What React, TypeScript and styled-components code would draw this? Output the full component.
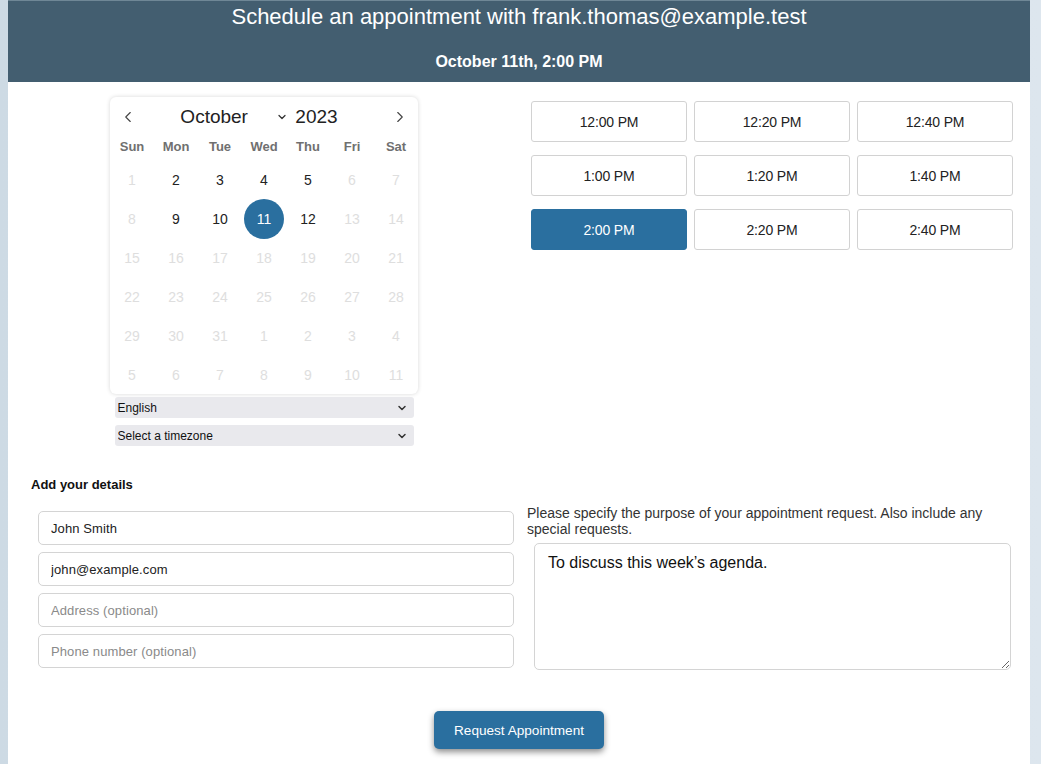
import React, { useState } from "react"
import styled, { createGlobalStyle } from "styled-components"
import { ChevronLeft, ChevronRight, ChevronDown } from "lucide-react"

const GlobalStyle = createGlobalStyle`
  html, body {
    margin: 0;
    padding: 0;
  }
  body {
    background: linear-gradient(90deg, #cddae4 0%, #d6e0e9 50%, #dde6ee 100%);
    font-family: "Liberation Sans", Arial, sans-serif;
    color: #222;
  }
  * { box-sizing: border-box; }
`

const Page = styled.div`
  width: 1022px;
  min-height: 100vh;
  margin-left: 8px;
  background: #fff;
`

const Header = styled.header`
  background: #435e70;
  color: #fff;
  text-align: center;
  padding: 3px 0 10px;
  border-top: 1px solid #6f8796;
`

const Title = styled.h1`
  margin: 0;
  font-size: 22px;
  font-weight: normal;
  line-height: 26px;
`

const Subtitle = styled.div`
  margin-top: 22px;
  font-size: 16px;
  font-weight: bold;
  line-height: 20px;
`

const Top = styled.section`
  display: grid;
  grid-template-columns: 512px 1fr;
`

const LeftCol = styled.div`
  display: flex;
  flex-direction: column;
  align-items: center;
  padding-top: 15px;
`

const RightCol = styled.div`
  padding: 19px 17px 0 11px;
`

const Card = styled.div`
  width: 308px;
  border-radius: 6px;
  background: #fff;
  box-shadow: 0 0 4px rgba(0, 0, 0, 0.16);
`

const CalHead = styled.div`
  height: 36px;
  display: flex;
  align-items: center;
  justify-content: space-between;
  padding: 4px 8px 0 8px;
`

const NavButton = styled.button`
  border: none;
  background: none;
  padding: 0;
  width: 20px;
  height: 24px;
  display: flex;
  align-items: center;
  justify-content: center;
  color: #444;
  cursor: pointer;
`

const MonthYear = styled.div`
  display: flex;
  align-items: center;
  font-size: 19px;
  color: #222;
  margin-right: 15px;
`

const SelectWrap = styled.div<{ $w: number }>`
  position: relative;
  width: ${(p) => p.$w}px;
`

const MonthSelect = styled.select`
  appearance: none;
  border: none;
  background: none;
  font: inherit;
  color: inherit;
  width: 100%;
  padding: 0 0 0 5px;
  outline: none;
`

const SelectArrow = styled.span<{ $right: number }>`
  position: absolute;
  right: ${(p) => p.$right}px;
  top: 50%;
  transform: translateY(-50%);
  display: flex;
  pointer-events: none;
  color: #333;
`

const Year = styled.span`
  margin-left: 3px;
`

const Weekdays = styled.div`
  display: grid;
  grid-template-columns: repeat(7, 44px);
  height: 27px;
  align-items: center;
`

const Weekday = styled.div`
  text-align: center;
  font-size: 13px;
  font-weight: bold;
  color: #707070;
`

const Days = styled.div`
  display: grid;
  grid-template-columns: repeat(7, 44px);
  grid-auto-rows: 39px;
`

const Day = styled.button<{ $state: "off" | "on" | "picked" }>`
  border: none;
  background: none;
  padding: 0;
  font: inherit;
  font-size: 14px;
  display: flex;
  align-items: center;
  justify-content: center;
  color: ${(p) => (p.$state === "off" ? "#dedede" : p.$state === "picked" ? "#fff" : "#222")};
  cursor: ${(p) => (p.$state === "off" ? "default" : "pointer")};

  span {
    width: 40px;
    height: 40px;
    border-radius: 50%;
    display: flex;
    align-items: center;
    justify-content: center;
    background: ${(p) => (p.$state === "picked" ? "#2a6f9f" : "transparent")};
  }
`

const SmallSelectWrap = styled.div<{ $gap: number }>`
  position: relative;
  width: 299px;
  margin-top: ${(p) => p.$gap}px;
`

const SmallSelect = styled.select`
  appearance: none;
  width: 100%;
  height: 21px;
  border: none;
  border-radius: 3px;
  background: #e9e9ed;
  font-family: "Liberation Sans", Arial, sans-serif;
  font-size: 12px;
  color: #111;
  padding: 0 3px;
  outline: none;
`

const SlotGrid = styled.div`
  display: grid;
  grid-template-columns: repeat(3, 1fr);
  column-gap: 7px;
  row-gap: 13px;
`

const Slot = styled.button<{ $active?: boolean }>`
  height: 41px;
  border: 1px solid ${(p) => (p.$active ? "#2a6f9f" : "#d2d2d2")};
  border-radius: 3px;
  background: ${(p) => (p.$active ? "#2a6f9f" : "#fff")};
  color: ${(p) => (p.$active ? "#fff" : "#222")};
  font-family: "Liberation Sans", Arial, sans-serif;
  font-size: 14px;
  letter-spacing: -0.15px;
  cursor: pointer;
`

const Details = styled.section`
  padding: 31px 19px 0 23px;
`

const DetailsHeading = styled.h3`
  margin: 0;
  font-size: 13px;
  line-height: 16px;
  font-weight: bold;
  color: #111;
`

const DetailsGrid = styled.div`
  display: grid;
  grid-template-columns: 476px 1fr;
  column-gap: 13px;
  padding-left: 7px;
  margin-top: 12px;
`

const Fields = styled.div`
  display: flex;
  flex-direction: column;
  gap: 7px;
  padding-top: 6px;
`

const Input = styled.input`
  height: 34px;
  width: 100%;
  border: 1px solid #d4d4d4;
  border-radius: 5px;
  padding: 0 12px;
  font-family: "Liberation Sans", Arial, sans-serif;
  font-size: 13px;
  letter-spacing: 0.1px;
  color: #222;
  outline: none;

  &::placeholder {
    color: #8a8a8a;
  }
`

const Purpose = styled.div`
  display: flex;
  flex-direction: column;
`

const PurposeLabel = styled.label`
  font-size: 14px;
  line-height: 16px;
  color: #333;
`

const TextArea = styled.textarea`
  margin: 6px 0 0 7px;
  height: 127px;
  border: 1px solid #d4d4d4;
  border-radius: 5px;
  padding: 10px 13px;
  font-family: "Liberation Sans", Arial, sans-serif;
  font-size: 16px;
  color: #111;
  outline: none;
  resize: both;
`

const Actions = styled.div`
  display: flex;
  justify-content: center;
  padding: 41px 0 20px;
`

const SubmitButton = styled.button`
  width: 170px;
  height: 38px;
  border: none;
  border-radius: 5px;
  background: #2a6f9f;
  color: #fff;
  font-family: "Liberation Sans", Arial, sans-serif;
  font-size: 13.6px;
  box-shadow: 0 3px 6px rgba(0, 0, 0, 0.45);
  cursor: pointer;
`

const weekdays = ["Sun", "Mon", "Tue", "Wed", "Thu", "Fri", "Sat"]
const slots = ["12:00 PM", "12:20 PM", "12:40 PM", "1:00 PM", "1:20 PM", "1:40 PM", "2:00 PM", "2:20 PM", "2:40 PM"]
const available = [2, 3, 4, 5, 9, 10, 11, 12]

// October 2023 starts on a Sunday; 42 cells, the last 11 from November
const cells = Array.from({ length: 42 }, (_, i) => (i < 31 ? { n: i + 1, cur: true } : { n: i - 30, cur: false }))

export default function App() {
  const [picked, setPicked] = useState(11)
  const [slot, setSlot] = useState("2:00 PM")
  const [purpose, setPurpose] = useState("To discuss this week\u2019s agenda.")

  return (
    <>
      <GlobalStyle />
      <Page>
        <Header>
          <Title>Schedule an appointment with frank.thomas@example.test</Title>
          <Subtitle>October {picked}th, {slot}</Subtitle>
        </Header>

        <Top>
          <LeftCol>
            <Card>
              <CalHead>
                <NavButton aria-label="Previous month">
                  <ChevronLeft size={18} strokeWidth={1.5} />
                </NavButton>
                <MonthYear>
                  <SelectWrap $w={117}>
                    <MonthSelect defaultValue="October">
                      <option>September</option>
                      <option>October</option>
                      <option>November</option>
                    </MonthSelect>
                    <SelectArrow $right={4}>
                      <ChevronDown size={12} strokeWidth={2.5} />
                    </SelectArrow>
                  </SelectWrap>
                  <Year>2023</Year>
                </MonthYear>
                <NavButton aria-label="Next month">
                  <ChevronRight size={18} strokeWidth={1.5} />
                </NavButton>
              </CalHead>
              <Weekdays>
                {weekdays.map((d) => (
                  <Weekday key={d}>{d}</Weekday>
                ))}
              </Weekdays>
              <Days>
                {cells.map((c, i) => {
                  const on = c.cur && available.includes(c.n)
                  const state = on && c.n === picked ? "picked" : on ? "on" : "off"
                  return (
                    <Day key={i} $state={state} onClick={() => on && setPicked(c.n)}>
                      <span>{c.n}</span>
                    </Day>
                  )
                })}
              </Days>
            </Card>
            <SmallSelectWrap $gap={3}>
              <SmallSelect defaultValue="en">
                <option value="en">English</option>
              </SmallSelect>
              <SelectArrow $right={6}>
                <ChevronDown size={12} strokeWidth={3} />
              </SelectArrow>
            </SmallSelectWrap>
            <SmallSelectWrap $gap={7}>
              <SmallSelect defaultValue="">
                <option value="">Select a timezone</option>
              </SmallSelect>
              <SelectArrow $right={6}>
                <ChevronDown size={12} strokeWidth={3} />
              </SelectArrow>
            </SmallSelectWrap>
          </LeftCol>

          <RightCol>
            <SlotGrid>
              {slots.map((s) => (
                <Slot key={s} $active={s === slot} onClick={() => setSlot(s)}>
                  {s}
                </Slot>
              ))}
            </SlotGrid>
          </RightCol>
        </Top>

        <Details>
          <DetailsHeading>Add your details</DetailsHeading>
          <DetailsGrid>
            <Fields>
              <Input defaultValue="John Smith" />
              <Input defaultValue="john@example.com" />
              <Input placeholder="Address (optional)" />
              <Input placeholder="Phone number (optional)" />
            </Fields>
            <Purpose>
              <PurposeLabel>
                Please specify the purpose of your appointment request. Also include any special requests.
              </PurposeLabel>
              <TextArea value={purpose} onChange={(e) => setPurpose(e.target.value)} />
            </Purpose>
          </DetailsGrid>
        </Details>

        <Actions>
          <SubmitButton>Request Appointment</SubmitButton>
        </Actions>
      </Page>
    </>
  )
}
